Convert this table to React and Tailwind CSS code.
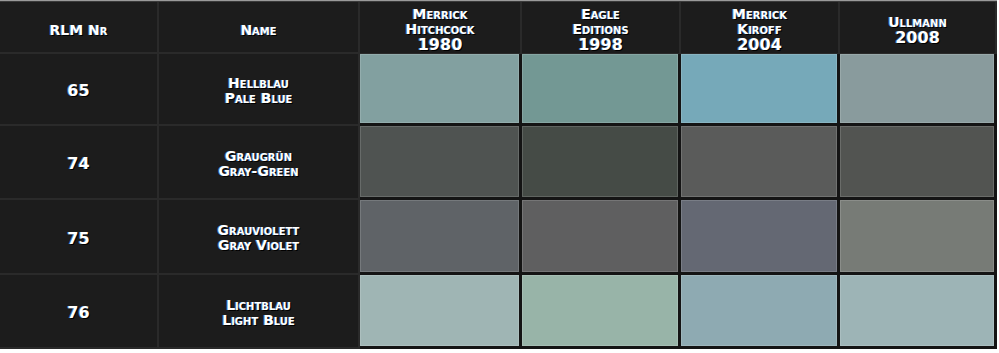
const columns = [
  { top: ['Merrick', 'Hitchcock'], year: '1980' },
  { top: ['Eagle', 'Editions'], year: '1998' },
  { top: ['Merrick', 'Kiroff'], year: '2004' },
  { top: ['Ullmann'], year: '2008' },
];

const rows = [
  { nr: '65', de: 'Hellblau', en: 'Pale Blue', h: 'h-[72px]', colors: ['#82a0a0', '#739894', '#76a9b9', '#899b9d'] },
  { nr: '74', de: 'Graugrün', en: 'Gray-Green', h: 'h-[74px]', colors: ['#4f5351', '#454b46', '#5a5b5a', '#525451'] },
  { nr: '75', de: 'Grauviolett', en: 'Gray Violet', h: 'h-[75px]', colors: ['#5f6367', '#5f5f60', '#646873', '#777b76'] },
  { nr: '76', de: 'Lichtblau', en: 'Light Blue', h: 'h-[74px]', colors: ['#9fb5b4', '#98b4a8', '#8eaab2', '#9db4b6'] },
];

const glow = '[text-shadow:-1px_0_0_rgba(90,170,255,0.6),1px_1px_0_#000]';

function Swatch({ color }) {
  return (
    <div className="border-r-[3px] border-b-[3px] border-[#141414] bg-[#141414]">
      <div
        className="h-full w-full shadow-[inset_0_0_0_1px_rgba(255,255,255,0.14)]"
        style={{ backgroundColor: color }}
      />
    </div>
  );
}

export default function App() {
  return (
    <div className="min-h-screen bg-white font-['DejaVu_Sans',Verdana,sans-serif] font-bold text-white">
      <div className="w-[997px] border-t border-[#9a9a9a] bg-[#1c1c1c]">
        {/* Header */}
        <div className="grid h-[53px] grid-cols-[159px_201px_162px_159px_159px_157px] border-t border-[#3a3a3a]">
          <div className={`flex items-center justify-center border-r-2 border-b-2 border-[#2a2a2a] pt-[6px] text-[14px] [font-variant:small-caps] ${glow}`}>
            RLM Nr
          </div>
          <div className={`flex items-center justify-center border-r-2 border-b-2 border-[#2a2a2a] pt-[6px] text-[14px] [font-variant:small-caps] ${glow}`}>
            Name
          </div>
          {columns.map((c, i) => (
            <div
              key={i}
              className={`flex flex-col items-center justify-center border-r-2 border-b border-[#2a2a2a] pt-[5px] ${glow}`}
            >
              {c.top.map((t) => (
                <span key={t} className="text-[14px] leading-[15px] [font-variant:small-caps]">{t}</span>
              ))}
              <span className="text-[16px] leading-[16px]">{c.year}</span>
            </div>
          ))}
        </div>

        {/* Rows */}
        {rows.map((r) => (
          <div key={r.nr} className={`grid ${r.h} grid-cols-[159px_201px_162px_159px_159px_157px]`}>
            <div className={`flex items-center justify-center border-r-2 border-b-2 border-[#2a2a2a] pt-[4px] text-[16px] ${glow}`}>
              {r.nr}
            </div>
            <div className={`flex flex-col items-center justify-center border-r-2 border-b-2 border-[#2a2a2a] pt-[3px] text-[14px] leading-[15px] [font-variant:small-caps] ${glow}`}>
              <span>{r.de}</span>
              <span>{r.en}</span>
            </div>
            {r.colors.map((c, i) => (
              <Swatch key={i} color={c} />
            ))}
          </div>
        ))}
      </div>
    </div>
  );
}
